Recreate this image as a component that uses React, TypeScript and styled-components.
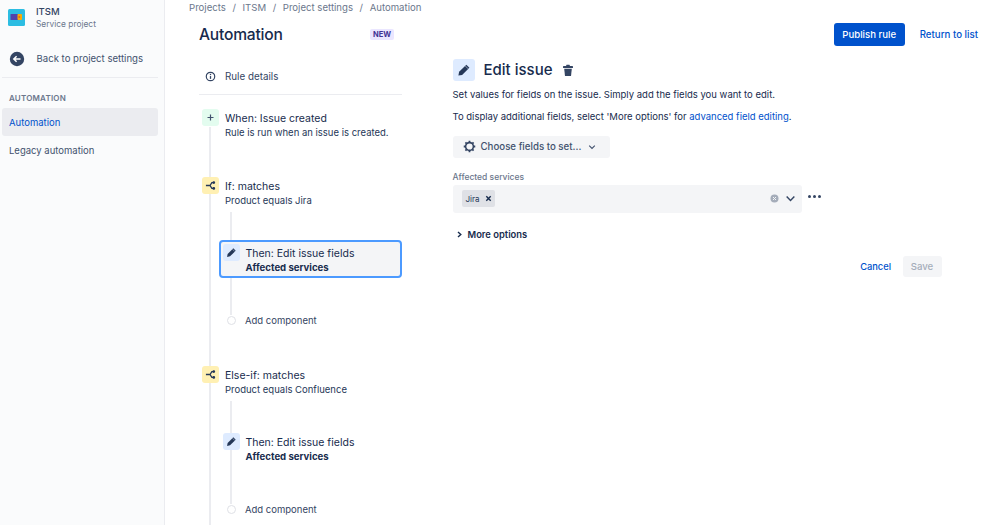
import React from 'react'
import styled, { createGlobalStyle } from 'styled-components'

const GlobalStyle = createGlobalStyle`
  html, body {
    margin: 0;
    padding: 0;
    background: #fff;
  }
  body {
    font-family: Inter, "Liberation Sans", sans-serif;
    color: #172b4d;
  }
`

const Page = styled.div`
  display: flex;
  width: 999px;
  height: 525px;
  overflow: hidden;
`

const Sidebar = styled.aside`
  flex: 0 0 165px;
  box-sizing: border-box;
  background: #fafbfc;
  border-right: 1px solid #ebecf0;
  padding: 0 6px 0 2px;
`

const ProjectRow = styled.div`
  display: flex;
  align-items: center;
  gap: 11px;
  height: 33px;
  padding: 1px 0 0 6px;
`

const ProjectName = styled.div`
  font-size: 9.5px;
  line-height: 13px;
  font-weight: 500;
  color: #344563;
`

const ProjectType = styled.div`
  font-size: 8.4px;
  line-height: 12px;
  color: #6b778c;
`

const BackRow = styled.div`
  display: flex;
  align-items: center;
  gap: 11.5px;
  height: 37px;
  padding-left: 7px;
  margin-top: 6px;
  border-bottom: 1px solid #ebecf0;
  font-size: 9.6px;
  color: #42526e;
`

const NavLabel = styled.div`
  font-size: 8px;
  font-weight: 600;
  letter-spacing: 0.2px;
  color: #6b778c;
  padding: 15px 0 0 7px;
  line-height: 10px;
  height: 15px;
`

const NavItem = styled.div<{ $active?: boolean }>`
  display: flex;
  align-items: center;
  height: 28px;
  padding-left: 7px;
  border-radius: 3px;
  font-size: 9.5px;
  color: ${({ $active }) => ($active ? '#0052cc' : '#42526e')};
  background: ${({ $active }) => ($active ? '#ebecf0' : 'transparent')};
`

const Main = styled.main`
  flex: 1;
  padding-left: 24px;
`

const Breadcrumbs = styled.nav`
  display: flex;
  gap: 6.6px;
  padding-top: 1px;
  font-size: 9.6px;
  line-height: 14px;
  color: #6b778c;
`

const HeaderRow = styled.header`
  display: flex;
  align-items: center;
  height: 22px;
  margin-top: 8px;
  padding: 0 21px 0 10px;
`

const TitleBlock = styled.div`
  display: flex;
  align-items: center;
  justify-content: space-between;
  width: 195px;
`

const Title = styled.h1`
  margin: 0;
  font-size: 15.6px;
  font-weight: 500;
  letter-spacing: -0.2px;
  color: #172b4d;
`

const NewBadge = styled.span`
  font-size: 7.5px;
  font-weight: 700;
  line-height: 11px;
  padding: 0 3px;
  border-radius: 2px;
  color: #403294;
  background: #eae6ff;
`

const Actions = styled.div`
  display: flex;
  align-items: center;
  gap: 15px;
  margin-left: auto;
`

const PrimaryButton = styled.button`
  height: 23px;
  width: 71px;
  padding: 0;
  border: 0;
  border-radius: 3px;
  background: #0052cc;
  color: #fff;
  font: 500 9.6px Inter, sans-serif;
`

const LinkText = styled.span`
  font-size: 9.7px;
  font-weight: 500;
  color: #0052cc;
`

const CancelLink = styled(LinkText)`
  font-size: 9.3px;
`

const Columns = styled.div`
  display: flex;
  margin-top: 13px;
  padding-left: 10px;
`

const RuleColumn = styled.section`
  flex: 0 0 202px;
`

const RuleDetails = styled.div`
  display: flex;
  align-items: center;
  gap: 9px;
  height: 36px;
  padding-left: 6px;
  border-bottom: 1px solid #ebecf0;
  font-size: 9.8px;
  color: #344563;
`

const Timeline = styled.div`
  position: relative;
  padding-top: 14px;

  &::before {
    content: '';
    position: absolute;
    left: 10px;
    top: 32px;
    bottom: -400px;
    width: 2px;
    background: #ebecf0;
  }
`

const Step = styled.div<{ $gap: number }>`
  position: relative;
  display: flex;
  gap: 6px;
  margin-left: 3px;
  margin-bottom: ${({ $gap }) => $gap}px;
`

const StepIcon = styled.div<{ $bg: string }>`
  flex: 0 0 17px;
  height: 17px;
  display: flex;
  align-items: center;
  justify-content: center;
  border-radius: 3px;
  background: ${({ $bg }) => $bg};
`

const StepText = styled.div`
  padding-top: 2px;
`

const StepTitle = styled.div`
  font-size: 10.5px;
  line-height: 15px;
  color: #172b4d;
`

const StepSub = styled.div<{ $bold?: boolean }>`
  font-size: ${({ $bold }) => ($bold ? 9.6 : 9.5)}px;
  line-height: 14px;
  font-weight: ${({ $bold }) => ($bold ? 700 : 400)};
  color: ${({ $bold }) => ($bold ? '#172b4d' : '#253858')};
`

const Branch = styled.div`
  position: relative;
  margin-left: 19.5px;
  padding-bottom: 39px;

  &::before {
    content: '';
    position: absolute;
    left: 11px;
    top: -28px;
    bottom: 51px;
    width: 2px;
    background: #ebecf0;
  }
`

const ThenCard = styled.div<{ $selected?: boolean }>`
  position: relative;
  display: flex;
  gap: 6px;
  box-sizing: border-box;
  width: 183px;
  height: 38px;
  padding: 2px 0 0 2px;
  margin: 0 0 35px;
  border-radius: 4px;
  border: 2px solid ${({ $selected }) => ($selected ? '#4c9aff' : 'transparent')};
  background: ${({ $selected }) => ($selected ? '#f4f5f7' : 'transparent')};
`

const AddRow = styled.div`
  position: relative;
  display: flex;
  align-items: center;
  gap: 9.5px;
  height: 14px;
  margin-left: 8px;
  font-size: 9.5px;
  color: #344563;
`

const AddDot = styled.span`
  width: 7px;
  height: 7px;
  border-radius: 50%;
  background: #fff;
  border: 1px solid #dfe1e6;
`

const EditPanel = styled.section`
  flex: 0 0 489px;
  margin-left: 51px;
`

const PanelHeading = styled.div`
  display: flex;
  align-items: center;
  gap: 9px;
  margin-top: 1px;
`

const PanelIcon = styled.div`
  width: 22px;
  height: 22px;
  display: flex;
  align-items: center;
  justify-content: center;
  border-radius: 3px;
  background: #deebff;
`

const PanelTitle = styled.h2`
  margin: 0 1px 1px 0;
  font-size: 15px;
  font-weight: 500;
  color: #172b4d;
`

const Paragraph = styled.p`
  margin: 0;
  font-size: 9.5px;
  line-height: 14px;
  color: #172b4d;
  padding-top: 7px;

  & + & {
    padding-top: 8px;
  }
`

const Anchor = styled.span`
  color: #0052cc;
`

const ChooseButton = styled.button`
  display: flex;
  align-items: center;
  gap: 5px;
  width: 157px;
  height: 21.5px;
  margin-top: 12px;
  padding: 0 0 0 10px;
  border: 0;
  border-radius: 3px;
  background: #f4f5f7;
  color: #42526e;
  font: 500 9.7px Inter, sans-serif;
`

const ChevronSlot = styled.span`
  display: flex;
  margin-left: 2px;
`

const FieldLabel = styled.div`
  margin-top: 13px;
  font-size: 8.5px;
  font-weight: 500;
  line-height: 12px;
  color: #6b778c;
`

const FieldRow = styled.div`
  display: flex;
  align-items: flex-start;
  margin-top: 2px;
`

const SelectBox = styled.div`
  display: flex;
  align-items: center;
  box-sizing: border-box;
  width: 349px;
  height: 28px;
  padding: 0 6px 0 9px;
  border-radius: 3px;
  background: #f4f5f7;
`

const Tag = styled.span`
  display: flex;
  align-items: center;
  gap: 5px;
  height: 17px;
  padding: 0 3px 0 4px;
  border-radius: 2px;
  background: #dfe1e6;
  font-size: 8px;
  color: #253858;
`

const SelectIcons = styled.div`
  display: flex;
  align-items: center;
  gap: 6px;
  margin-left: auto;
`

const MoreDots = styled.div`
  display: flex;
  gap: 2px;
  margin: 10px 0 0 6px;
`

const Dot = styled.span`
  width: 3px;
  height: 3px;
  border-radius: 50%;
  background: #344563;
`

const MoreOptions = styled.div`
  display: flex;
  align-items: center;
  gap: 5px;
  margin: 16px 0 0 3px;
  font-size: 9.4px;
  font-weight: 600;
  color: #172b4d;
`

const FormActions = styled.div`
  display: flex;
  align-items: center;
  justify-content: flex-end;
  gap: 11.5px;
  margin-top: 16px;
`

const SaveButton = styled.button`
  width: 39px;
  height: 21px;
  padding: 0;
  border: 0;
  border-radius: 3px;
  background: #f4f5f7;
  color: #a5adba;
  font: 500 9.6px Inter, sans-serif;
`

const Pencil = ({ size = 11 }: { size?: number }) => (
  <svg width={size} height={size} viewBox="0 0 12 12">
    <path d="M8 1.4 10.6 4 4.4 10.2 1.2 10.8 1.8 7.6Z" fill="#253858" />
    <path d="M7 2.4 9.6 5" stroke="#deebff" strokeWidth="0.5" />
  </svg>
)

const BranchGlyph = () => (
  <svg width="11" height="11" viewBox="0 0 12 12" fill="none" stroke="#253858" strokeWidth="1.4">
    <path d="M1 6H5.5M9 2.8H7.5L5.5 6 7.5 9.2H9" />
    <circle cx="9.6" cy="2.8" r="0.8" fill="#253858" />
    <circle cx="9.6" cy="9.2" r="0.8" fill="#253858" />
  </svg>
)

const Chevron = ({ size = 8, color = '#42526e', width = 1.4 }: { size?: number; color?: string; width?: number }) => (
  <svg width={size} height={size} viewBox="0 0 10 10" fill="none" stroke={color} strokeWidth={width}>
    <path d="M1.5 3.2 5 6.8 8.5 3.2" />
  </svg>
)

const Logo = () => (
  <svg width="17" height="17" viewBox="0 0 17 17">
    <rect width="17" height="17" rx="1.5" fill="#2cbde2" />
    <rect x="2.5" y="5" width="7.5" height="6" rx="0.5" fill="#5243aa" />
    <rect x="9.5" y="5" width="4.5" height="6" rx="1" fill="#ffab00" />
    <circle cx="11.3" cy="8" r="1" fill="#de6b1f" />
  </svg>
)

const BackIcon = () => (
  <svg width="16" height="16" viewBox="0 0 16 16">
    <circle cx="8" cy="8" r="7.2" fill="#344563" />
    <path d="M11.5 8H5M7.6 5.2 4.8 8 7.6 10.8" fill="none" stroke="#fff" strokeWidth="1.5" />
  </svg>
)

const InfoIcon = () => (
  <svg width="11" height="11" viewBox="0 0 12 12" fill="none">
    <circle cx="6" cy="6" r="4.6" stroke="#344563" strokeWidth="1.3" />
    <path d="M6 5.5V8.6" stroke="#344563" strokeWidth="1.4" />
    <circle cx="6" cy="3.7" r="0.8" fill="#344563" />
  </svg>
)

const PlusIcon = () => (
  <svg width="9" height="9" viewBox="0 0 9 9">
    <path d="M4.5 1.5V7.5M1.5 4.5H7.5" stroke="#42526e" strokeWidth="1.2" />
  </svg>
)

const TrashIcon = () => (
  <svg width="12" height="13" viewBox="0 0 12 13">
    <rect x="1" y="2" width="10" height="2" rx="0.6" fill="#344563" />
    <rect x="4.2" y="0.8" width="3.6" height="1.6" rx="0.5" fill="#344563" />
    <path d="M2.2 4.8H9.8L9 12H3Z" fill="#344563" />
  </svg>
)

const GearIcon = () => (
  <svg width="13" height="13" viewBox="0 0 14 14" fill="none">
    <circle cx="7" cy="7" r="4.2" stroke="#344563" strokeWidth="1.7" />
    <path
      d="M7 .8V2.6M7 11.4V13.2M.8 7H2.6M11.4 7H13.2M2.6 2.6 3.9 3.9M10.1 10.1 11.4 11.4M2.6 11.4 3.9 10.1M10.1 3.9 11.4 2.6"
      stroke="#344563"
      strokeWidth="1.9"
    />
  </svg>
)

const CloseX = () => (
  <svg width="7" height="7" viewBox="0 0 7 7">
    <path d="M1.3 1.3 5.7 5.7M5.7 1.3 1.3 5.7" stroke="#172b4d" strokeWidth="1.4" />
  </svg>
)

const ClearIcon = () => (
  <svg width="9" height="9" viewBox="0 0 9 9">
    <circle cx="4.5" cy="4.5" r="4" fill="#a5adba" />
    <path d="M3 3 6 6M6 3 3 6" stroke="#f4f5f7" strokeWidth="1" />
  </svg>
)

const RightChevron = () => (
  <svg width="7" height="7" viewBox="0 0 7 7" fill="none">
    <path d="M2 1 4.8 3.5 2 6" stroke="#172b4d" strokeWidth="1.4" />
  </svg>
)

const crumbs = ['Projects', '/', 'ITSM', '/', 'Project settings', '/', 'Automation']

const branches = [
  { title: 'If: matches', sub: 'Product equals Jira', selected: true },
  { title: 'Else-if: matches', sub: 'Product equals Confluence', selected: false },
]

export default function App() {
  return (
    <Page>
      <GlobalStyle />
      <Sidebar>
        <ProjectRow>
          <Logo />
          <div>
            <ProjectName>ITSM</ProjectName>
            <ProjectType>Service project</ProjectType>
          </div>
        </ProjectRow>
        <BackRow>
          <BackIcon />
          Back to project settings
        </BackRow>
        <NavLabel>AUTOMATION</NavLabel>
        <NavItem $active>Automation</NavItem>
        <NavItem>Legacy automation</NavItem>
      </Sidebar>
      <Main>
        <Breadcrumbs>
          {crumbs.map((c, i) => (
            <span key={i}>{c}</span>
          ))}
        </Breadcrumbs>
        <HeaderRow>
          <TitleBlock>
            <Title>Automation</Title>
            <NewBadge>NEW</NewBadge>
          </TitleBlock>
          <Actions>
            <PrimaryButton>Publish rule</PrimaryButton>
            <LinkText>Return to list</LinkText>
          </Actions>
        </HeaderRow>
        <Columns>
          <RuleColumn>
            <RuleDetails>
              <InfoIcon />
              Rule details
            </RuleDetails>
            <Timeline>
              <Step $gap={37}>
                <StepIcon $bg="#e3fcef">
                  <PlusIcon />
                </StepIcon>
                <StepText>
                  <StepTitle>When: Issue created</StepTitle>
                  <StepSub>Rule is run when an issue is created.</StepSub>
                </StepText>
              </Step>
              {branches.map(b => (
                <React.Fragment key={b.title}>
                  <Step $gap={32}>
                    <StepIcon $bg="#fff0b3">
                      <BranchGlyph />
                    </StepIcon>
                    <StepText>
                      <StepTitle>{b.title}</StepTitle>
                      <StepSub>{b.sub}</StepSub>
                    </StepText>
                  </Step>
                  <Branch>
                    <ThenCard $selected={b.selected}>
                      <StepIcon $bg="#deebff">
                        <Pencil />
                      </StepIcon>
                      <StepText>
                        <StepTitle>Then: Edit issue fields</StepTitle>
                        <StepSub $bold>Affected services</StepSub>
                      </StepText>
                    </ThenCard>
                    <AddRow>
                      <AddDot />
                      Add component
                    </AddRow>
                  </Branch>
                </React.Fragment>
              ))}
            </Timeline>
          </RuleColumn>
          <EditPanel>
            <PanelHeading>
              <PanelIcon>
                <Pencil size={14} />
              </PanelIcon>
              <PanelTitle>Edit issue</PanelTitle>
              <TrashIcon />
            </PanelHeading>
            <Paragraph>Set values for fields on the issue. Simply add the fields you want to edit.</Paragraph>
            <Paragraph>
              To display additional fields, select 'More options' for <Anchor>advanced field editing</Anchor>.
            </Paragraph>
            <ChooseButton>
              <GearIcon />
              Choose fields to set...
              <ChevronSlot>
                <Chevron />
              </ChevronSlot>
            </ChooseButton>
            <FieldLabel>Affected services</FieldLabel>
            <FieldRow>
              <SelectBox>
                <Tag>
                  Jira
                  <CloseX />
                </Tag>
                <SelectIcons>
                  <ClearIcon />
                  <Chevron size={11} color="#344563" width={1.3} />
                </SelectIcons>
              </SelectBox>
              <MoreDots>
                <Dot />
                <Dot />
                <Dot />
              </MoreDots>
            </FieldRow>
            <MoreOptions>
              <RightChevron />
              More options
            </MoreOptions>
            <FormActions>
              <CancelLink>Cancel</CancelLink>
              <SaveButton>Save</SaveButton>
            </FormActions>
          </EditPanel>
        </Columns>
      </Main>
    </Page>
  )
}
